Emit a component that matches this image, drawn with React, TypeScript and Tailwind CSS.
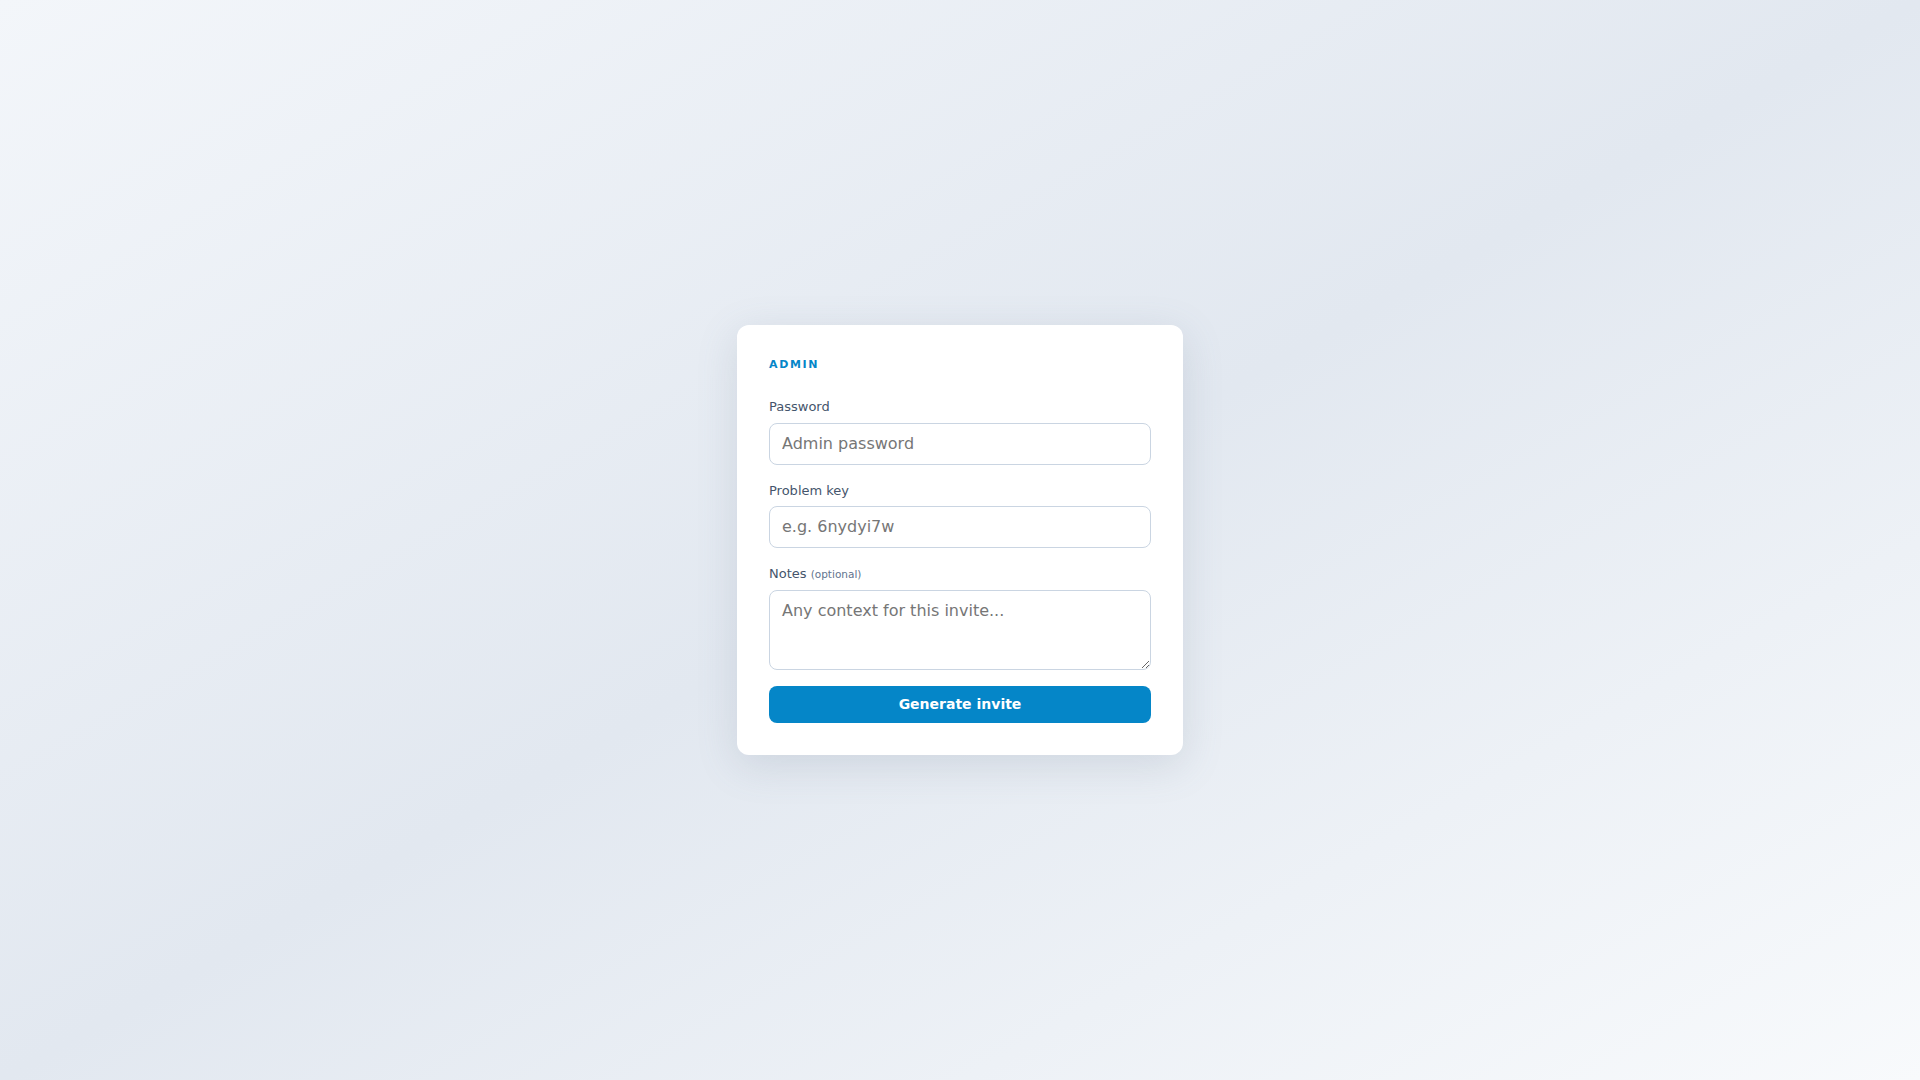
import React, { useState } from 'react';

const fieldClass =
    'block w-full rounded-lg border border-slate-300 bg-white px-3 py-2 text-base leading-6 text-slate-900 placeholder:text-[#767676] outline-none focus:border-sky-500';

const labelClass = 'mb-1.5 block text-[13px] leading-[19.5px] text-slate-600';

const AdminInviteCard: React.FC = () => {
    const [password, setPassword] = useState('');
    const [problemKey, setProblemKey] = useState('');
    const [notes, setNotes] = useState('');

    return (
        <div className="w-[446px] rounded-xl bg-white px-8 pt-8 pb-8 shadow-[0_10px_40px_rgba(100,116,139,0.18)]">
            <div className="mb-6 text-[11px] leading-4 font-bold uppercase tracking-[0.15em] text-[#0586c8]">Admin</div>
            <form className="space-y-4" onSubmit={(e) => e.preventDefault()}>
                <div>
                    <label className={labelClass}>Password</label>
                    <input
                        type="password"
                        value={password}
                        onChange={(e) => setPassword(e.target.value)}
                        placeholder="Admin password"
                        className={fieldClass}
                    />
                </div>
                <div>
                    <label className={labelClass}>Problem key</label>
                    <input
                        type="text"
                        value={problemKey}
                        onChange={(e) => setProblemKey(e.target.value)}
                        placeholder="e.g. 6nydyi7w"
                        className={fieldClass}
                    />
                </div>
                <div>
                    <label className={labelClass}>
                        Notes <span className="text-[10.5px] leading-none text-slate-500">(optional)</span>
                    </label>
                    <textarea
                        value={notes}
                        onChange={(e) => setNotes(e.target.value)}
                        placeholder="Any context for this invite..."
                        className={fieldClass + ' h-20'}
                    />
                </div>
                <button
                    type="submit"
                    className="block h-[37px] w-full rounded-lg bg-[#0586c8] text-sm font-bold text-white hover:bg-[#0477b2]"
                >
                    Generate invite
                </button>
            </form>
        </div>
    );
};

const App: React.FC = () => {
    return (
        <div
            className="flex min-h-screen items-center justify-center bg-linear-to-br from-[#f3f6fa] via-[#e2e8f0] to-[#f8fafc] p-6"
            style={{ fontFamily: '"DejaVu Sans", Verdana, sans-serif' }}
        >
            <AdminInviteCard />
        </div>
    );
};

export default App;
